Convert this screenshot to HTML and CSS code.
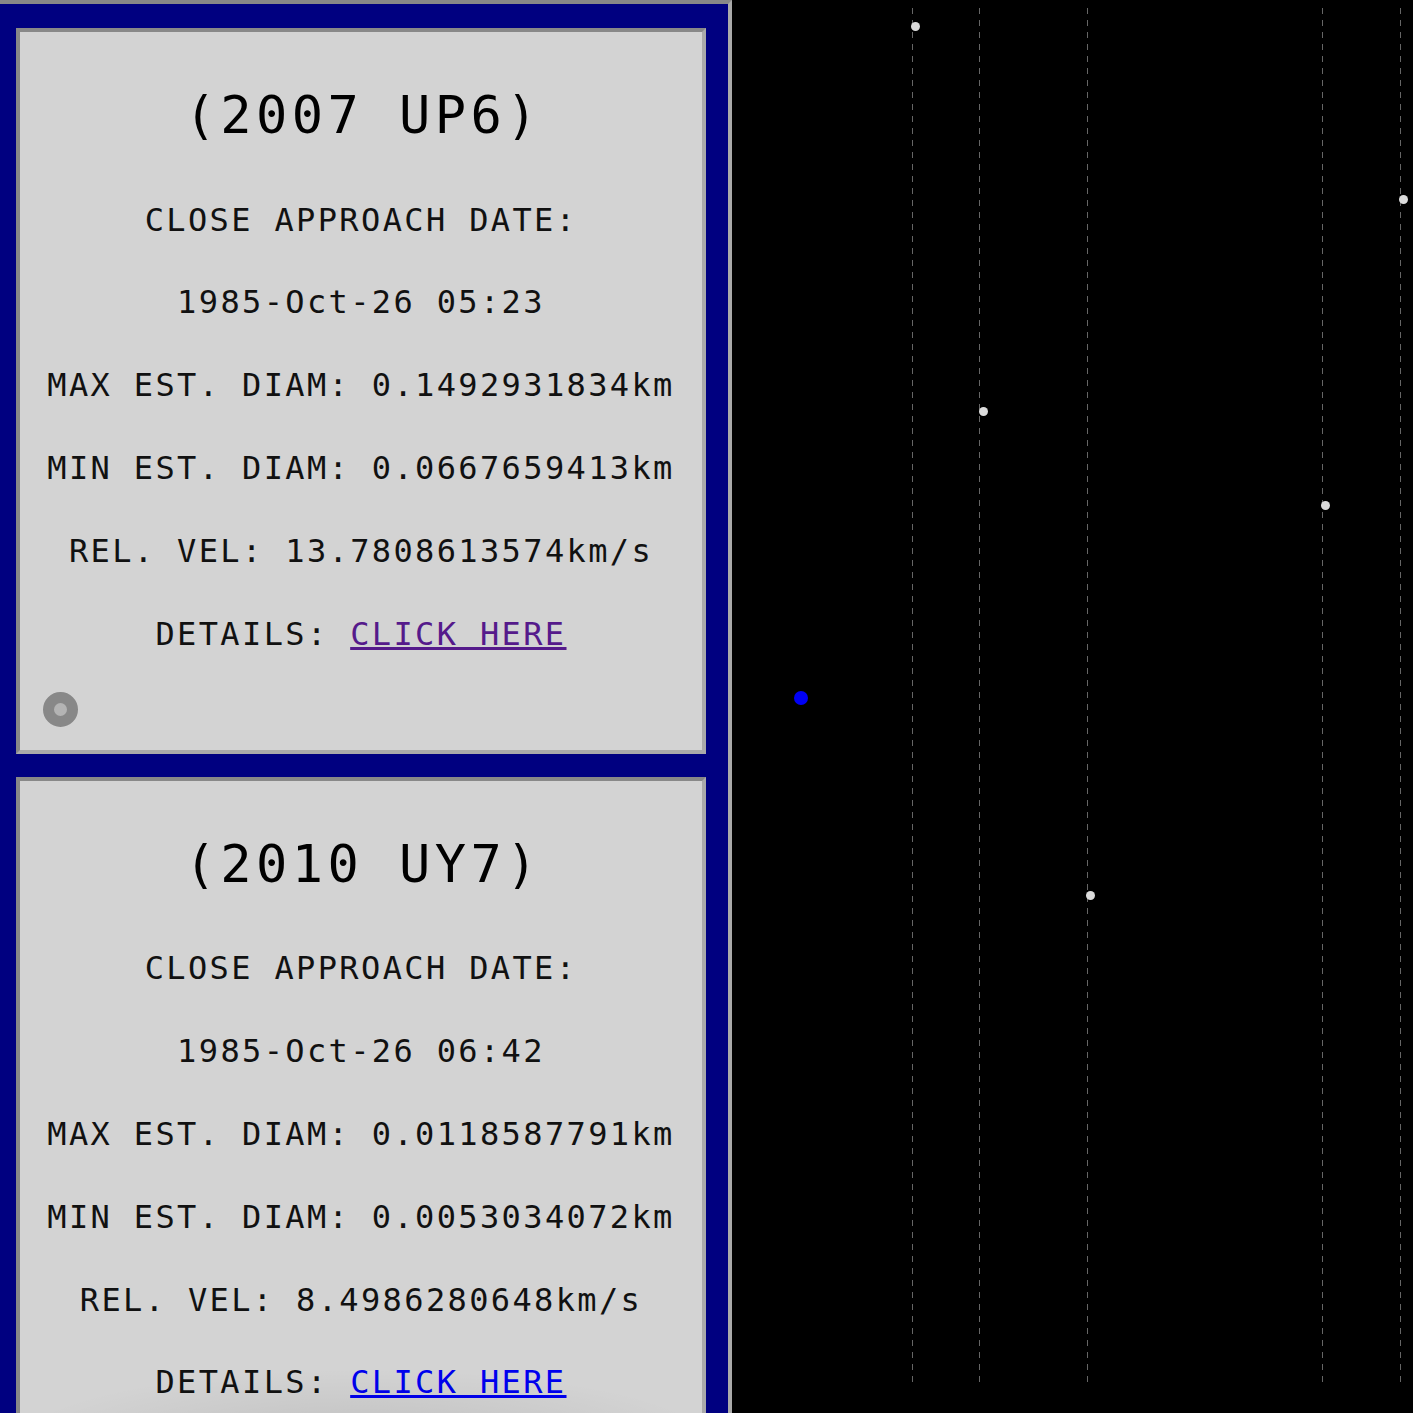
FILE: index.html
```html
<!DOCTYPE html>
<html>
<head>
<meta charset="utf-8">
<link rel="stylesheet" href="styles.css">
</head>
<body>
<div class="layout">
  <aside class="panel">
    <section class="card">
      <h2 class="title">(2007 UP6)</h2>
      <p class="row">CLOSE APPROACH DATE:</p>
      <p class="row">1985-Oct-26 05:23</p>
      <p class="row">MAX EST. DIAM: 0.1492931834km</p>
      <p class="row">MIN EST. DIAM: 0.0667659413km</p>
      <p class="row">REL. VEL: 13.7808613574km/s</p>
      <p class="row">DETAILS: <a class="link visited" href="#">CLICK HERE</a></p>
      <div class="radio"></div>
    </section>
    <section class="card">
      <h2 class="title">(2010 UY7)</h2>
      <p class="row">CLOSE APPROACH DATE:</p>
      <p class="row">1985-Oct-26 06:42</p>
      <p class="row">MAX EST. DIAM: 0.0118587791km</p>
      <p class="row">MIN EST. DIAM: 0.0053034072km</p>
      <p class="row">REL. VEL: 8.4986280648km/s</p>
      <p class="row">DETAILS: <a class="link" href="#">CLICK HERE</a></p>
      <div class="radio"></div>
    </section>
    <div class="fade"></div>
  </aside>
  <main class="space">
    <div class="track" style="left:180px"></div>
    <div class="track" style="left:247px"></div>
    <div class="track" style="left:355px"></div>
    <div class="track" style="left:590px"></div>
    <div class="track" style="left:668px"></div>
    <div class="dot" style="left:178.5px;top:21.5px"></div>
    <div class="dot" style="left:246.5px;top:406.5px"></div>
    <div class="dot" style="left:353.5px;top:890.5px"></div>
    <div class="dot" style="left:588.5px;top:500.5px"></div>
    <div class="dot" style="left:666.5px;top:194.5px"></div>
    <div class="earth" style="left:62px;top:691px"></div>
  </main>
</div>
</body>
</html>
```
FILE: styles.css
```css
html, body {
  margin: 0;
  padding: 0;
  background: #000;
}
.layout {
  display: flex;
  width: 1413px;
  height: 1413px;
  overflow: hidden;
}
.panel {
  width: 690px;
  flex: none;
  background: #000080;
  border-top: 4px solid #888;
  border-right: 4px solid #aaa;
  padding: 24px 22px 0 16px;
  height: 1413px;
  overflow: hidden;
  position: relative;
  font-family: "DejaVu Sans Mono", monospace;
  color: #000;
}
.card {
  background: #d3d3d3;
  border-style: solid;
  border-width: 4px;
  border-color: #888 #aaa #aaa #888;
  margin-bottom: 23px;
  padding-top: 21.4px;
  text-align: center;
}
.title {
  margin: 0;
  font-size: 52px;
  font-weight: normal;
  letter-spacing: 0.085em;
  line-height: 125.2px;
  padding-left: 0.085em;
}
.row {
  margin: 0;
  font-size: 32px;
  letter-spacing: 0.074em;
  line-height: 82.8px;
  white-space: nowrap;
  color: #111;
}
.link {
  color: #0000ee;
}
.link.visited {
  color: #551a8b;
}
.radio {
  width: 13px;
  height: 13px;
  border: 11px solid #888;
  border-radius: 50%;
  background: #b4b4b4;
  margin: 17px 0 22.5px 23px;
}
.fade {
  position: absolute;
  left: 0;
  right: 0;
  bottom: 0;
  height: 90px;
  background: radial-gradient(ellipse 60% 100% at 50% 100%, rgba(0,0,0,0.09), rgba(0,0,0,0) 80%);
  pointer-events: none;
}
.space {
  flex: 1;
  position: relative;
  background: #000;
}
.track {
  position: absolute;
  top: 8px;
  width: 1px;
  height: 1379px;
  background: repeating-linear-gradient(to bottom, #666 0 6px, transparent 6px 12px);
}
.dot {
  position: absolute;
  width: 9px;
  height: 9px;
  border-radius: 50%;
  background: #dcdcdc;
}
.earth {
  position: absolute;
  width: 14px;
  height: 14px;
  border-radius: 50%;
  background: #0000f5;
}
```
